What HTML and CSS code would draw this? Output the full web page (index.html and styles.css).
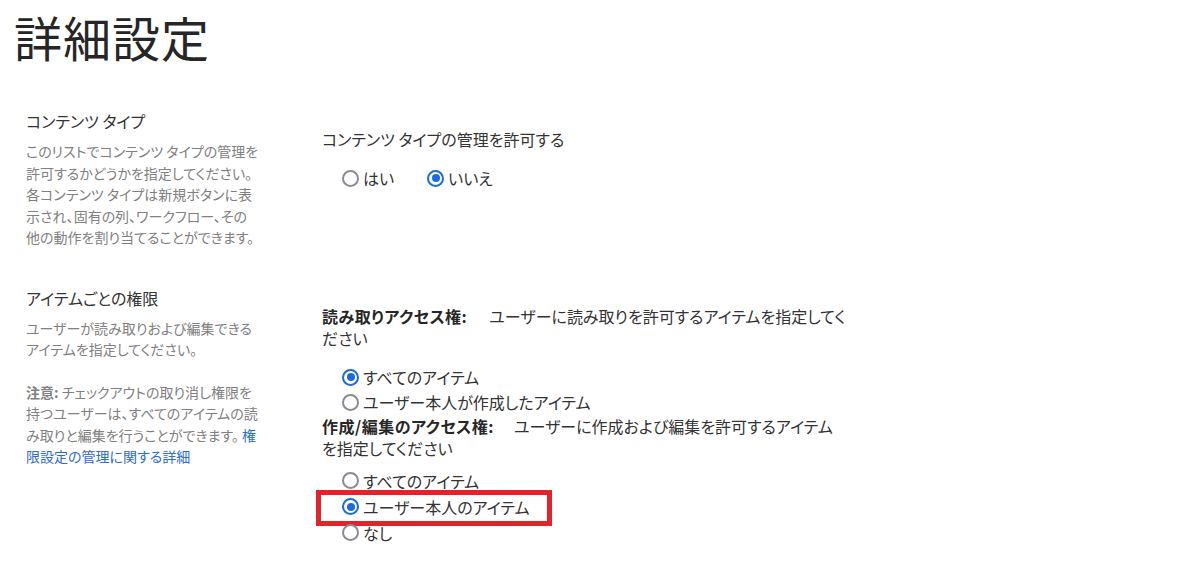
FILE: index.html
```html
<!DOCTYPE html>
<html lang="ja">
<head>
<meta charset="utf-8">
<title>詳細設定</title>
<link rel="stylesheet" href="styles.css">
</head>
<body>
<h1 class="page-title">詳細設定</h1>

<section class="setting setting-ctype">
  <div class="setting-info">
    <h2 class="setting-name">コンテンツ タイプ</h2>
    <p class="setting-desc">このリストでコンテンツ タイプの管理を<br>許可するかどうかを指定してください。<br>各コンテンツ タイプは新規ボタンに表<br>示され、固有の列、ワークフロー、その<br>他の動作を割り当てることができます。</p>
  </div>
  <div class="setting-body">
    <div class="field-label">コンテンツ タイプの管理を許可する</div>
    <div class="choice-inline">
      <label class="choice"><span class="radio"></span>はい</label>
      <label class="choice"><span class="radio is-on"></span>いいえ</label>
    </div>
  </div>
</section>

<section class="setting setting-perm">
  <div class="setting-info">
    <h2 class="setting-name">アイテムごとの権限</h2>
    <p class="setting-desc">ユーザーが読み取りおよび編集できる<br>アイテムを指定してください。</p>
    <p class="setting-desc"><b>注意:</b> チェックアウトの取り消し権限を<br>持つユーザーは、すべてのアイテムの読<br>み取りと編集を行うことができます。 <a href="#" class="more-link">権<br>限設定の管理に関する詳細</a></p>
  </div>
  <div class="setting-body">
    <div class="field-label"><b>読み取りアクセス権:</b><span class="gap gap-read"></span>ユーザーに読み取りを許可するアイテムを指定してく<br>ださい</div>
    <div class="choice-list choice-list-read">
      <label class="choice"><span class="radio is-on"></span>すべてのアイテム</label>
      <label class="choice"><span class="radio"></span>ユーザー本人が作成したアイテム</label>
    </div>
    <div class="field-label"><b>作成/編集のアクセス権:</b><span class="gap"></span>ユーザーに作成および編集を許可するアイテム<br>を指定してください</div>
    <div class="choice-list choice-list-edit">
      <label class="choice"><span class="radio"></span>すべてのアイテム</label>
      <label class="choice is-marked"><span class="radio is-on"></span>ユーザー本人のアイテム</label>
      <label class="choice"><span class="radio"></span>なし</label>
    </div>
  </div>
</section>
</body>
</html>
```

FILE: styles.css
```css
html, body {
  margin: 0;
  padding: 0;
  background: #ffffff;
}

body {
  font-family: "Noto Sans CJK JP", "Noto Sans", sans-serif;
  font-feature-settings: "palt";
  color: #333333;
  width: 1200px;
  height: 569px;
  overflow: hidden;
}

.page-title {
  margin: 6px 0 0 14px;
  font-size: 48px;
  line-height: 60px;
  font-weight: 400;
  color: #262626;
  letter-spacing: 1px;
}

/* each setting: description on the left, controls on the right */
.setting {
  display: grid;
  grid-template-columns: 296px 1fr;
  padding-left: 26px;
}

.setting-ctype {
  margin-top: 44px;
}

.setting-perm {
  margin-top: 38px;
}

.setting-name {
  margin: 0;
  font-size: 16px;
  line-height: 22px;
  font-weight: 400;
  color: #333333;
}

.setting-desc {
  margin: 9px 0 0;
  font-size: 14px;
  line-height: 21.5px;
  color: #808080;
}

.setting-desc + .setting-desc {
  margin-top: 21px;
}

.setting-desc b {
  font-weight: 700;
  color: #808080;
}

.more-link {
  color: #2c6cd2;
  text-decoration: none;
}

.setting-body {
  padding-top: 18px;
}

.field-label {
  font-size: 16px;
  line-height: 22px;
  color: #333333;
}

.field-label b {
  font-weight: 700;
  color: #262626;
  letter-spacing: 0.5px;
}

.field-label .gap {
  display: inline-block;
  width: 20px;
}

.field-label .gap-read {
  width: 22px;
}

.choice {
  display: flex;
  align-items: center;
  gap: 4px;
  font-size: 16px;
  color: #333333;
  position: relative;
}

.choice-inline {
  display: flex;
  gap: 33px;
  margin-top: 17px;
  padding-left: 20px;
}

.choice-inline .choice {
  height: 22px;
}

.choice-list {
  padding-left: 20px;
}

.choice-list-read {
  margin-top: 16px;
}

.choice-list-read .choice {
  height: 25px;
}

.choice-list-edit {
  margin-top: 9px;
}

.choice-list-edit .choice {
  height: 26px;
}

/* radio button drawn as a ring with an optional dot */
.radio {
  box-sizing: border-box;
  width: 17px;
  height: 17px;
  border-radius: 50%;
  border: 2px solid #8a8a95;
  background: #ffffff;
  flex: none;
  position: relative;
}

.radio.is-on {
  border-color: #1a6be0;
}

.radio.is-on::after {
  content: "";
  position: absolute;
  left: 2.5px;
  top: 2.5px;
  width: 8px;
  height: 8px;
  border-radius: 50%;
  background: #1a6be0;
}

/* highlight frame drawn over the selected option */
.choice.is-marked::after {
  content: "";
  position: absolute;
  left: -26px;
  top: -4px;
  width: 236px;
  height: 36px;
  box-sizing: border-box;
  border: 5px solid #e3232a;
  pointer-events: none;
}
```
